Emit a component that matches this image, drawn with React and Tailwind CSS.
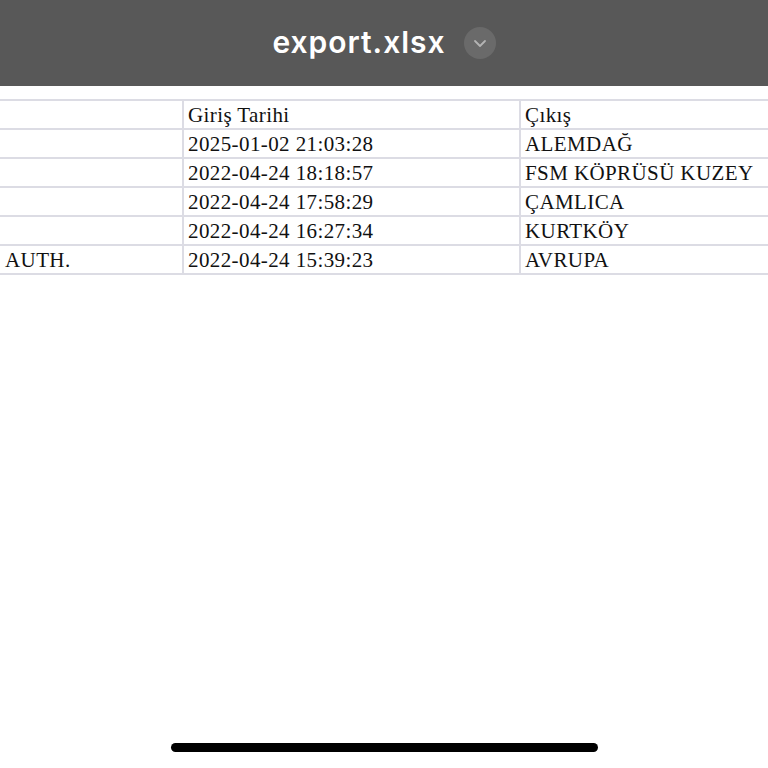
const rows = [
  ["", "Giriş Tarihi", "Çıkış"],
  ["", "2025-01-02 21:03:28", "ALEMDAĞ"],
  ["", "2022-04-24 18:18:57", "FSM KÖPRÜSÜ KUZEY"],
  ["", "2022-04-24 17:58:29", "ÇAMLICA"],
  ["", "2022-04-24 16:27:34", "KURTKÖY"],
  ["AUTH.", "2022-04-24 15:39:23", "AVRUPA"],
];

const ChevronButton = () => (
  <div className="w-[32px] h-[32px] rounded-full bg-[#6a6a6a] flex items-center justify-center">
    <svg width="14" height="9" viewBox="0 0 14 9" fill="none">
      <path d="M2 2l5 5 5-5" stroke="#b4b4b4" strokeWidth="1.8" strokeLinecap="round" strokeLinejoin="round" />
    </svg>
  </div>
);

const App = () => {
  return (
    <div className="h-[768px] w-[768px] bg-white flex flex-col overflow-hidden">
      <div className="h-[86px] bg-[#585858] flex items-center justify-center gap-[18px] shrink-0">
        <span className="text-white text-[30px] font-semibold tracking-[1px] font-['Inter',sans-serif] leading-none pb-[3px]">
          export.xlsx
        </span>
        <ChevronButton />
      </div>

      <div className="mt-[13px] border-t-2 border-[#dcdce4] font-['Liberation_Serif',serif] text-[21px] tracking-[0.4px] text-[#111]">
        {rows.map((r, i) => (
          <div key={i} className="grid grid-cols-[184px_337px_1fr] h-[29px]">
            <div className="border-b-2 border-r-2 border-[#dcdce4] pl-[5px] flex items-center leading-none pt-[1px]">
              {r[0]}
            </div>
            <div className="border-b-2 border-r-2 border-[#dcdce4] pl-[4px] flex items-center leading-none pt-[1px]">
              {r[1]}
            </div>
            <div className="border-b-2 border-[#dcdce4] pl-[4px] flex items-center leading-none pt-[1px]">
              {r[2]}
            </div>
          </div>
        ))}
      </div>

      <div className="flex-1" />
      <div className="flex justify-center mb-[16px]">
        <div className="w-[427px] h-[9px] rounded-full bg-black" />
      </div>
    </div>
  );
};

export default App;
